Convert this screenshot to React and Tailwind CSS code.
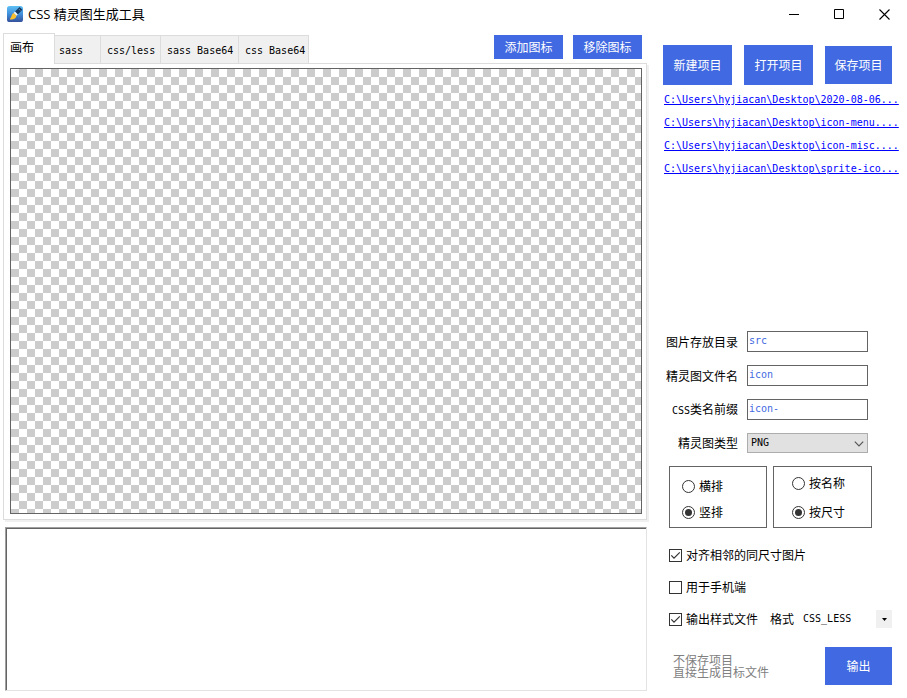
import { useState } from "react";

const tabs = [
  { id: "sass", label: "sass", width: "w-[46px]", pad: "pl-1" },
  { id: "css", label: "css/less", width: "w-[60px]", pad: "pl-1.5" },
  { id: "sass64", label: "sass Base64", width: "w-[78px]", pad: "pl-1.5" },
  { id: "css64", label: "css Base64", width: "w-[70px]", pad: "pl-1.5" },
];

const recent = [
  "C:\\Users\\hyjiacan\\Desktop\\2020-08-06...",
  "C:\\Users\\hyjiacan\\Desktop\\icon-menu....",
  "C:\\Users\\hyjiacan\\Desktop\\icon-misc....",
  "C:\\Users\\hyjiacan\\Desktop\\sprite-ico...",
];

const MONO = "font-['DejaVu_Sans_Mono','Noto_Sans_CJK_SC',monospace] text-[10px]";

function AppIcon() {
  return (
    <svg className="size-4" viewBox="0 0 16 16" aria-hidden="true">
      <defs>
        <linearGradient id="tile" x1="0" y1="0" x2="0" y2="1">
          <stop offset="0" stopColor="#5fc0f5" />
          <stop offset="0.5" stopColor="#3f8fdc" />
          <stop offset="1" stopColor="#35509c" />
        </linearGradient>
      </defs>
      <rect width="16" height="16" rx="2.6" fill="url(#tile)" />
      <path d="M12.6 1 15.400 3.800 10.800 8.400 8 5.600Z" fill="#153a63" />
      <path d="m12.200 3.400.9.9" stroke="#8fd0f5" strokeWidth="0.9" />
      <path d="M8 5.600 10.800 8.400 9.400 9.800 6.600 7Z" fill="#f3f6f8" />
      <path d="M6.600 7C4.400 7.800 5 11 2.600 13.200c3 .6 6.600 0 6.800-3.400Z" fill="#fbc02d" />
    </svg>
  );
}

function PrimaryButton({ size, children }) {
  return (
    <button type="button" className={`bg-[#4169e1] text-center text-white ${size}`}>
      {children}
    </button>
  );
}

function TextField({ id, label, value }) {
  return (
    <div className="flex items-center gap-[9px]">
      <label htmlFor={id} className="w-[75px] text-right whitespace-nowrap">{label}</label>
      <input
        id={id}
        type="text"
        defaultValue={value}
        className={`h-[21px] w-[121px] border border-[#646464] bg-white px-px pb-[3px] text-[#4169e1] outline-none ${MONO}`}
      />
    </div>
  );
}

function Radio({ name, label, checked }) {
  return (
    <label className="flex h-4 items-center gap-1">
      <span className="grid place-items-center">
        <input
          type="radio"
          name={name}
          defaultChecked={checked}
          className="peer col-start-1 row-start-1 size-[13px] appearance-none rounded-full border border-[#333] bg-white"
        />
        <span className="pointer-events-none col-start-1 row-start-1 hidden size-[7px] rounded-full bg-[#333] peer-checked:block" />
      </span>
      {label}
    </label>
  );
}

function Check({ label, checked }) {
  return (
    <label className="flex h-[18px] items-center gap-1 whitespace-nowrap">
      <span className="grid place-items-center">
        <input
          type="checkbox"
          defaultChecked={checked}
          className="peer col-start-1 row-start-1 size-[13px] appearance-none border border-[#333] bg-white"
        />
        <svg
          className="pointer-events-none col-start-1 row-start-1 hidden size-[13px] peer-checked:block"
          viewBox="0 0 13 13"
          fill="none"
          stroke="#333"
          strokeWidth="1.2"
          aria-hidden="true"
        >
          <path d="M2.3 6.3 5 9.2 10.8 3.4" />
        </svg>
      </span>
      {label}
    </label>
  );
}

export default function App() {
  const [active, setActive] = useState("canvas");

  return (
    <div className="flex min-h-screen flex-col bg-white font-['Noto_Sans_CJK_SC',sans-serif] text-[12px] leading-4 text-black">
      <header className="flex h-7 items-center">
        <div className="flex flex-1 items-center gap-[5px] pl-[7px]">
          <AppIcon />
          <h1 className="font-['Open_Sans','Noto_Sans_CJK_SC',sans-serif] text-[13px] leading-5">CSS 精灵图生成工具</h1>
        </div>
        <button type="button" aria-label="最小化" className="flex h-7 w-[45px] items-center justify-center">
          <svg className="size-[11px]" viewBox="0 0 11 11" stroke="#000" aria-hidden="true"><path d="M0 5.5h10" /></svg>
        </button>
        <button type="button" aria-label="最大化" className="flex h-7 w-[45px] items-center justify-center">
          <svg className="size-[11px]" viewBox="0 0 11 11" fill="none" stroke="#000" aria-hidden="true"><path d="M.5.5h9v9h-9Z" /></svg>
        </button>
        <button type="button" aria-label="关闭" className="flex h-7 w-[45px] items-center justify-center">
          <svg className="size-[11px]" viewBox="0 0 11 11" stroke="#000" strokeWidth="1.1" aria-hidden="true"><path d="m.5.5 10 10M10.500.5l-10 10" /></svg>
        </button>
      </header>

      <div className="flex flex-1">
        <main className="flex min-w-0 flex-1 flex-col pt-[5px] pb-[7px] pl-[3px]">
          <div className="flex items-end pr-[2px]">
            <div role="tablist" className="flex items-end">
              <button
                type="button"
                role="tab"
                aria-selected={active === "canvas"}
                onClick={() => setActive("canvas")}
                className="z-10 -mb-px h-[31px] w-[52px] border border-b-0 border-[#dcdcdc] bg-white pb-1 pl-1.5 text-left"
              >
                画布
              </button>
              {tabs.map((t) => (
                <button
                  key={t.id}
                  type="button"
                  role="tab"
                  aria-selected={active === t.id}
                  onClick={() => setActive(t.id)}
                  className={`h-7 border-t border-r border-[#dcdcdc] bg-[#f0f0f0] pt-0.5 text-left whitespace-nowrap ${t.width} ${t.pad} ${MONO}`}
                >
                  {t.label}
                </button>
              ))}
            </div>
            <div className="ml-auto flex gap-2.5 pr-[5px] pb-1">
              <PrimaryButton size="h-6 w-[69px]">添加图标</PrimaryButton>
              <PrimaryButton size="h-6 w-[69px]">移除图标</PrimaryButton>
            </div>
          </div>

          <section className="mr-[2px] flex flex-1 border border-[#dcdcdc] pt-1 pr-1 pb-[5px] pl-1.5 shadow-[2px_2px_0_#f0f0f0]">
            <div className="flex-1 border border-[#646464] bg-[repeating-conic-gradient(#ccc_0_25%,#fff_0_50%)] bg-size-[16px_16px]" />
          </section>

          <section className="mt-[7px] mr-[2px] ml-[2px] h-[164px] border border-t-[#a0a0a0] border-r-[#e3e3e3] border-b-[#e3e3e3] border-l-[#a0a0a0]">
            <div className="h-full border-t border-l border-[#646464]" />
          </section>
        </main>

        <aside className="flex w-[258px] flex-col pt-[17px] pr-2 pb-[13px] pl-[14px]">
          <div className="flex items-center justify-between pr-[7px]">
            <PrimaryButton size="h-10 w-[69px]">新建项目</PrimaryButton>
            <PrimaryButton size="h-10 w-[69px]">打开项目</PrimaryButton>
            <PrimaryButton size="h-[38px] w-[67px]">保存项目</PrimaryButton>
          </div>

          <nav className={`mt-[7px] flex flex-col gap-[7px] pl-px whitespace-nowrap text-[#0000ff] ${MONO}`}>
            {recent.map((path) => (
              <a key={path} href="#recent" className="leading-4 underline underline-offset-1">{path}</a>
            ))}
          </nav>

          <form className="mt-auto">
            <div className="flex flex-col gap-[13px]">
              <TextField id="dir" label="图片存放目录" value="src" />
              <TextField id="file" label="精灵图文件名" value="icon" />
              <TextField id="prefix" label={<><span className={MONO}>CSS</span>类名前缀</>} value="icon-" />
              <div className="flex items-center gap-[9px]">
                <label htmlFor="type" className="w-[75px] text-right">精灵图类型</label>
                <div className="relative">
                  <select
                    id="type"
                    className={`block h-5 w-[121px] appearance-none border border-[#adadad] bg-[#e1e1e1] px-[3px] ${MONO}`}
                  >
                    <option>PNG</option>
                  </select>
                  <svg
                    className="pointer-events-none absolute top-2 right-1 h-[6px] w-[10px]"
                    viewBox="0 0 10 6"
                    fill="none"
                    stroke="#555"
                    strokeWidth="1.2"
                    aria-hidden="true"
                  >
                    <path d="m.8.6 4.200 4.200L9.200.6" />
                  </svg>
                </div>
              </div>
            </div>

            <div className="mt-[13px] flex gap-1.5 pl-1.5">
              <div className="flex h-[62px] w-[98px] flex-col justify-between border border-[#646464] pt-[11px] pb-[7px] pl-3">
                <Radio name="layout" label="横排" />
                <Radio name="layout" label="竖排" checked />
              </div>
              <div className="flex h-[62px] w-[99px] flex-col justify-between border border-[#646464] pt-2 pb-[7px] pl-[18px]">
                <Radio name="order" label="按名称" />
                <Radio name="order" label="按尺寸" checked />
              </div>
            </div>

            <div className="mt-[18px] flex flex-col gap-[14px] pl-1.5">
              <Check label="对齐相邻的同尺寸图片" checked />
              <Check label="用于手机端" />
              <div className="flex items-center pr-[7px]">
                <Check label="输出样式文件" checked />
                <label htmlFor="format" className="ml-3">格式</label>
                <div className="relative ml-2 flex-1">
                  <select id="format" className={`block h-[18px] w-full appearance-none bg-white pl-px ${MONO}`}>
                    <option>CSS_LESS</option>
                  </select>
                  <span className="pointer-events-none absolute top-0 right-0 flex h-[18px] w-4 items-center justify-center bg-[#f0f0f0]">
                    <svg className="h-[3px] w-[5px]" viewBox="0 0 5 3" aria-hidden="true"><path d="M0 0h5L2.500 3Z" /></svg>
                  </span>
                </div>
              </div>
            </div>

            <div className="mt-[19px] flex items-center justify-between pr-[7px] pl-[10px]">
              <p className="leading-3 text-[#808080]">
                不保存项目
                <br />
                直接生成目标文件
              </p>
              <PrimaryButton size="h-[38px] w-[67px]">输出</PrimaryButton>
            </div>
          </form>
        </aside>
      </div>
    </div>
  );
}
